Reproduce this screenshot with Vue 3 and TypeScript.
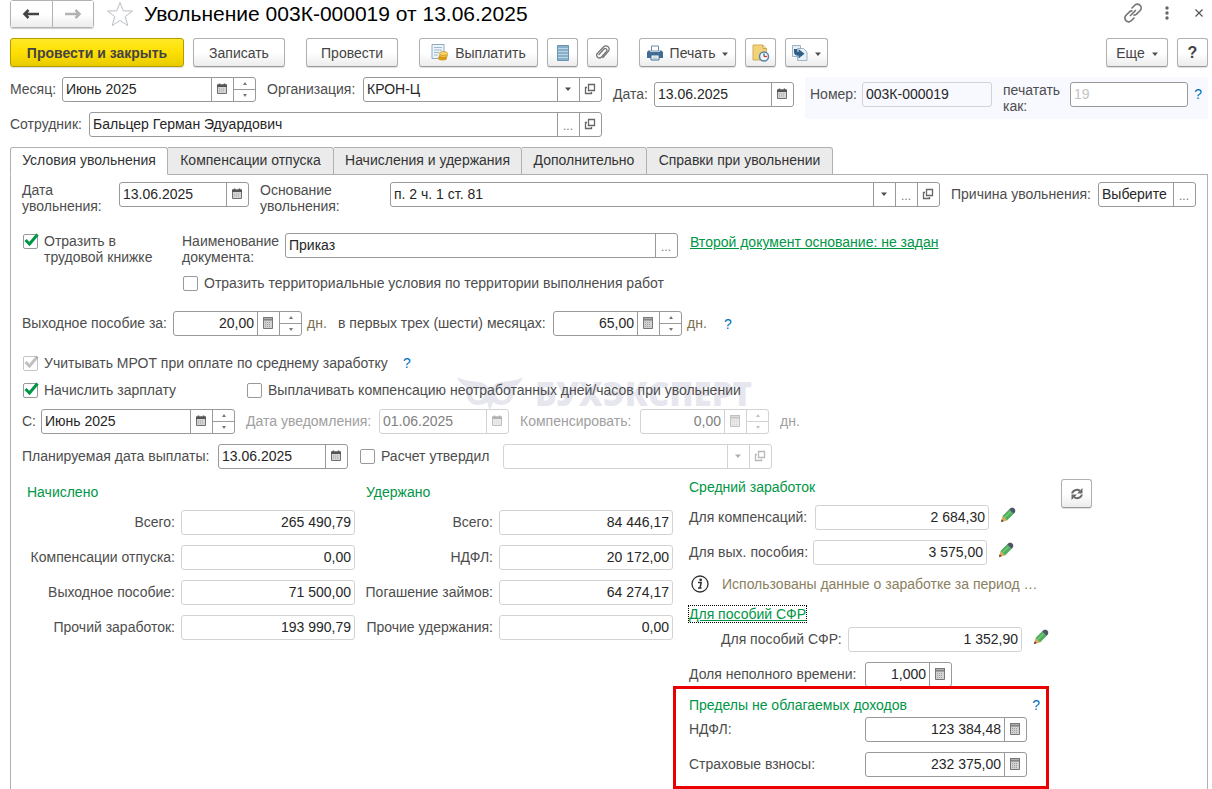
<script setup lang="ts">
import { ref } from 'vue'

interface Total {
  id: string
  label: string
  value: string
}

const tabs = [
  { title: 'Условия увольнения', size: 't1' },
  { title: 'Компенсации отпуска', size: 't2' },
  { title: 'Начисления и удержания', size: 't3' },
  { title: 'Дополнительно', size: 't4' },
  { title: 'Справки при увольнении', size: 't5' },
]
const activeTab = ref(0)

const accrued: Total[] = [
  { id: 'acc-total', label: 'Всего:', value: '265 490,79' },
  { id: 'acc-vacation', label: 'Компенсации отпуска:', value: '0,00' },
  { id: 'acc-severance', label: 'Выходное пособие:', value: '71 500,00' },
  { id: 'acc-other', label: 'Прочий заработок:', value: '193 990,79' },
]
const withheld: Total[] = [
  { id: 'wh-total', label: 'Всего:', value: '84 446,17' },
  { id: 'wh-ndfl', label: 'НДФЛ:', value: '20 172,00' },
  { id: 'wh-loans', label: 'Погашение займов:', value: '64 274,17' },
  { id: 'wh-other', label: 'Прочие удержания:', value: '0,00' },
]

const month = ref('Июнь 2025')
const date = ref('13.06.2025')
const employee = ref('Бальцер Герман Эдуардович')
const dismissDate = ref('13.06.2025')
const docName = ref('Приказ')
const inBook = ref(true)
const territorial = ref(false)
const severanceDays = ref('20,00')
const monthsDays = ref('65,00')
const payroll = ref(true)
const payHours = ref(false)
const fromMonth = ref('Июнь 2025')
const payDate = ref('13.06.2025')
const approved = ref(false)
const share = ref('1,000')
const ndflLimit = ref('123 384,48')
const feesLimit = ref('232 375,00')
</script>

<template>
  <svg class="sprite" width="0" height="0" aria-hidden="true">
    <symbol id="i-cal" viewBox="0 0 12 12">
      <path d="M1.500 2h9v8.500h-9z" fill="#d4d4d4" stroke="#707070" />
      <path d="M1 1.500h10V4H1z" fill="#555" />
      <path d="M3.500 .5v1.500M8.500 .5v1.500" stroke="#555" stroke-width="1.500" />
      <path d="M3 6h6M3 8h6" stroke="#a8a8a8" stroke-dasharray="1 1" />
    </symbol>
    <symbol id="i-calc" viewBox="0 0 12 12">
      <path d="M1.500 .5h9v11h-9z" fill="#d2d2d2" stroke="#777" />
      <path d="M1 0h10v3.500H1z" fill="#777" />
      <path d="M2 1.700h8" stroke="#bdbdbd" />
      <path d="M3 5.500h6M3 7.500h6M3 9.500h6" stroke="#a0a0a0" stroke-dasharray="1 1" />
    </symbol>
    <symbol id="i-down" viewBox="0 0 6 4"><path d="M0 .5h6L3 4z" fill="#4d4d4d" /></symbol>
    <symbol id="i-open" viewBox="0 0 12 12">
      <path d="M4.500 1.500h6v6h-6z" fill="none" stroke="#666" stroke-width="1.300" />
      <path d="M3 4.500H1.500v6h6V9" fill="none" stroke="#666" stroke-width="1.300" />
    </symbol>
    <symbol id="i-check" viewBox="0 0 15 15">
      <path d="M1.500 7 5.500 11 13.500 1.500" fill="none" stroke="currentColor" stroke-width="3" />
    </symbol>
    <symbol id="i-pencil" viewBox="0 0 16 16">
      <path d="M1 15l1.500-6 4.500 4.500z" fill="#e0a55a" />
      <path d="M1 15l.7-2.700 2 2z" fill="#4a3b30" />
      <path d="M2.500 9 9 2.500 13.500 7 7 13.500z" fill="#4fae5c" />
      <path d="M4.500 10.800l6.800-6.800" stroke="#73c97c" stroke-width="1.500" />
      <path d="M9 2.500 11 .8h2.500L15.200 2.500V5L13.500 7z" fill="#4d5866" />
    </symbol>
  </svg>

  <main class="page">
    <header class="titlebar">
      <div class="nav">
        <button type="button" aria-label="Назад">
          <svg width="18" height="12" viewBox="0 0 18 12"><path d="M6.500 2 2.500 6l4 4M2.500 6H17" fill="none" stroke="#444" stroke-width="2.500" /></svg>
        </button>
        <button type="button" aria-label="Вперед">
          <svg width="18" height="12" viewBox="0 0 18 12"><path d="M11.500 2l4 4-4 4M15.500 6H1" fill="none" stroke="#b3b3b3" stroke-width="2.500" /></svg>
        </button>
      </div>
      <button type="button" class="plain star" aria-label="В избранное">
        <svg width="28" height="26" viewBox="0 0 28 26"><path d="M14 1.500l3.200 8.300 9.300.3-7.300 5.500 2.600 8.900L14 19.400l-7.800 5.100 2.600-8.900L1.500 10.100l9.300-.3z" fill="#fff" stroke="#b9bec4" /></svg>
      </button>
      <h1>Увольнение 003К-000019 от 13.06.2025</h1>
      <div class="window-tools">
        <button type="button" class="plain" aria-label="Ссылка">
          <svg width="20" height="20" viewBox="0 0 20 20" fill="none" stroke="#777" stroke-width="1.700" stroke-linecap="round"><path d="M9 5l2.500-2.500a3.700 3.700 0 0 1 5.700 5L13.500 11.200a3 3 0 0 1-2.500.8M11 15l-2.500 2.500a3.700 3.700 0 0 1-5.700-5L6.500 8.800A3 3 0 0 1 9 8M7.500 12.500l5-5" /></svg>
        </button>
        <button type="button" class="plain" aria-label="Меню">
          <svg width="4" height="14" viewBox="0 0 4 14" fill="#666"><circle cx="2" cy="2" r="1.700" /><circle cx="2" cy="7" r="1.700" /><circle cx="2" cy="12" r="1.700" /></svg>
        </button>
        <button type="button" class="plain" aria-label="Закрыть">
          <svg width="8" height="8" viewBox="0 0 8 8"><path d="M.5.5l7 7M7.500.5l-7 7" stroke="#555" stroke-width="1.200" /></svg>
        </button>
      </div>
    </header>

    <div class="toolbar">
      <button type="button" class="btn primary b174">Провести и закрыть</button>
      <button type="button" class="btn b92">Записать</button>
      <button type="button" class="btn b92 apart">Провести</button>
      <button type="button" class="btn b119 apart">
        <svg width="17" height="17" viewBox="0 0 17 17"><path d="M1 .5h12v14H1z" fill="#edf4fa" stroke="#8ba9c0" /><path d="M3 3.500h8M3 6h8M3 8.500h5M3 11h4" stroke="#9bb9cf" /><ellipse cx="11.500" cy="14" rx="4.500" ry="2.500" fill="#d99b1c" /><ellipse cx="12.500" cy="11.500" rx="4" ry="2.200" fill="#f0c040" stroke="#b98212" stroke-width=".6" /><ellipse cx="12.500" cy="9.500" rx="4" ry="2" fill="#f9d768" stroke="#b98212" stroke-width=".6" /></svg>
        Выплатить
      </button>
      <button type="button" class="btn b31" aria-label="Движения документа">
        <svg width="12" height="16" viewBox="0 0 12 16"><path d="M.5.5h11v15H.5z" fill="#86afca" stroke="#6b94b0" /><path d="M1 3.500h10M1 6.500h10M1 9.500h10M1 12.500h10" stroke="#bcd4e3" /></svg>
      </button>
      <button type="button" class="btn b31" aria-label="Присоединенные файлы">
        <svg width="14" height="15" viewBox="0 0 14 15"><path d="M3 9.500 8 4a1.700 1.700 0 0 1 2.500 2.300L5.500 12A2.700 2.700 0 0 1 1.500 8.300L7.500 2a3.200 3.200 0 0 1 4.800 4.400L7 12.500" fill="none" stroke="#777" stroke-width="1.300" stroke-linecap="round" /></svg>
      </button>
      <button type="button" class="btn b97 apart">
        <svg width="16" height="16" viewBox="0 0 16 16"><path d="M4.500 1h7v5h-7z" fill="#fff" stroke="#6b8aa5" /><path d="M1.500 5.500h2V7h9V5.500h2L16 7v6H0V7z" fill="#416c94" /><path d="M4 10h8v5H4z" fill="#fff" stroke="#416c94" /><path d="M5.500 12h5M5.500 13.500h5" stroke="#9ab" stroke-width=".7" /></svg>
        Печать
        <svg class="arrow" width="6" height="4"><use href="#i-down" /></svg>
      </button>
      <button type="button" class="btn b31" aria-label="Напоминание">
        <svg width="18" height="18" viewBox="0 0 18 18"><path d="M1 1h10l3.500 3.500V16H1z" fill="#f2d27b" stroke="#d0ad55" /><path d="M11 1v3.500h3.500" fill="#fbeab8" stroke="#c9a54a" /><circle cx="12" cy="12.500" r="4.500" fill="#f4f8fb" stroke="#5b83a6" stroke-width="1.500" /><path d="M12 9.500v3" stroke="#3c638a" stroke-width="1.300" /><path d="M12 12.500h3" stroke="#d43a2f" stroke-width="1.300" /></svg>
      </button>
      <button type="button" class="btn b43" aria-label="Создать на основании">
        <svg width="16" height="16" viewBox="0 0 16 16"><path d="M.5.5h8v11h-8z" fill="#e5eef5" stroke="#9ab4c8" /><path d="M5.500 3.500h6l3.500 3.500v8.500H5.500z" fill="#e8f0f6" stroke="#9ab4c8" /><path d="M2 4h3v2c0 .8.500 1 1.500 1V4l6 4.800-6 4.800v-3C3.500 10.600 2 9.500 2 7z" fill="#2f5f88" /></svg>
        <svg class="arrow" width="6" height="4"><use href="#i-down" /></svg>
      </button>
      <button type="button" class="btn b62 last">
        Еще
        <svg class="arrow" width="6" height="4"><use href="#i-down" /></svg>
      </button>
      <button type="button" class="btn b31 help">?</button>
    </div>

    <section class="head">
      <div class="head-left">
        <div class="row">
          <label class="w52" for="month">Месяц:</label>
          <div class="field f194">
            <input id="month" v-model="month" type="text" />
            <button type="button" class="cell" aria-label="Календарь"><svg width="12" height="12"><use href="#i-cal" /></svg></button>
            <span class="spin"><button type="button" aria-label="Больше"></button><button type="button" aria-label="Меньше"></button></span>
          </div>
          <label class="w96 gap" for="org">Организация:</label>
          <div class="field grow">
            <select id="org"><option>КРОН-Ц</option></select>
            <span class="cell drop"><svg width="6" height="4"><use href="#i-down" /></svg></span>
            <button type="button" class="cell" aria-label="Открыть"><svg width="12" height="12"><use href="#i-open" /></svg></button>
          </div>
        </div>
        <div class="row">
          <label class="w79" for="employee">Сотрудник:</label>
          <div class="field grow">
            <input id="employee" v-model="employee" type="text" />
            <button type="button" class="cell dots" aria-label="Выбрать">...</button>
            <button type="button" class="cell" aria-label="Открыть"><svg width="12" height="12"><use href="#i-open" /></svg></button>
          </div>
        </div>
      </div>
      <div class="row head-date">
        <label class="w41" for="date">Дата:</label>
        <div class="field f140">
          <input id="date" v-model="date" type="text" />
          <button type="button" class="cell" aria-label="Календарь"><svg width="12" height="12"><use href="#i-cal" /></svg></button>
        </div>
      </div>
      <div class="row number">
        <label class="w52" for="number">Номер:</label>
        <div class="field pale clear f130"><input id="number" type="text" value="003К-000019" readonly /></div>
        <label class="w67 gap two" for="print-as">печатать<br />как:</label>
        <div class="field grow"><input id="print-as" type="text" placeholder="19" /></div>
        <button type="button" class="plain hint">?</button>
      </div>
    </section>

    <nav class="tabs" role="tablist">
      <button
        v-for="(tab, i) in tabs"
        :key="tab.title"
        type="button"
        role="tab"
        :class="['tab', tab.size, { active: i === activeTab }]"
        :aria-selected="i === activeTab"
        @click="activeTab = i"
      >
        {{ tab.title }}
      </button>
    </nav>

    <section class="panel">
      <div class="row top">
        <label class="w97 two" for="dismiss-date">Дата<br />увольнения:</label>
        <div class="field f130">
          <input id="dismiss-date" v-model="dismissDate" type="text" />
          <button type="button" class="cell" aria-label="Календарь"><svg width="12" height="12"><use href="#i-cal" /></svg></button>
        </div>
        <label class="w130 gap two" for="reason">Основание<br />увольнения:</label>
        <div class="field grow">
          <select id="reason"><option>п. 2 ч. 1 ст. 81</option></select>
          <span class="cell drop"><svg width="6" height="4"><use href="#i-down" /></svg></span>
          <button type="button" class="cell dots" aria-label="Выбрать">...</button>
          <button type="button" class="cell" aria-label="Открыть"><svg width="12" height="12"><use href="#i-open" /></svg></button>
        </div>
        <label class="w147 gap one" for="cause">Причина увольнения:</label>
        <div class="field f98">
          <input id="cause" type="text" value="Выберите" />
          <button type="button" class="cell dots" aria-label="Выбрать">...</button>
        </div>
      </div>

      <div class="row top book">
        <label class="check two w160">
          <span class="box"><input v-model="inBook" type="checkbox" /><svg width="15" height="15"><use href="#i-check" /></svg></span>
          <span>Отразить в<br />трудовой книжке</span>
        </label>
        <label class="w103 two" for="doc-name">Наименование<br />документа:</label>
        <div class="field f393">
          <input id="doc-name" v-model="docName" type="text" />
          <button type="button" class="cell dots" aria-label="Выбрать">...</button>
        </div>
        <a class="link second" href="#second">Второй документ основание: не задан</a>
      </div>

      <label class="check territory">
        <span class="box"><input v-model="territorial" type="checkbox" /><svg width="15" height="15"><use href="#i-check" /></svg></span>
        <span>Отразить территориальные условия по территории выполнения работ</span>
      </label>

      <div class="row severance">
        <label class="w151" for="sev-days">Выходное пособие за:</label>
        <div class="field f129 num">
          <input id="sev-days" v-model="severanceDays" type="text" />
          <button type="button" class="cell" aria-label="Калькулятор"><svg width="12" height="12"><use href="#i-calc" /></svg></button>
          <span class="spin"><button type="button" aria-label="Больше"></button><button type="button" aria-label="Меньше"></button></span>
        </div>
        <span class="unit">дн.</span>
        <label class="w215" for="first-days">в первых трех (шести) месяцах:</label>
        <div class="field f129 num">
          <input id="first-days" v-model="monthsDays" type="text" />
          <button type="button" class="cell" aria-label="Калькулятор"><svg width="12" height="12"><use href="#i-calc" /></svg></button>
          <span class="spin"><button type="button" aria-label="Больше"></button><button type="button" aria-label="Меньше"></button></span>
        </div>
        <span class="unit">дн.</span>
        <button type="button" class="plain hint">?</button>
      </div>

      <div class="row flags first-flags">
        <label class="check w375">
          <span class="box off"><input type="checkbox" checked disabled /><svg width="15" height="15"><use href="#i-check" /></svg></span>
          <span>Учитывать МРОТ при оплате по среднему заработку</span>
        </label>
        <button type="button" class="plain hint">?</button>
      </div>
      <div class="row flags marked">
        <div class="watermark" aria-hidden="true">
          <svg width="66" height="34" viewBox="0 0 66 34"><path d="M0 0c7 4 15 4 22 5 6 1 9 4 11 9 2-5 5-8 11-9 7-1 15-1 22-5-2 5-5 8-9 10 1 10-4 18-12 18-4 0-7-1-9-3l-3 9-3-9c-2 2-5 3-9 3C12 28 8 20 9 10 5 8 2 5 0 0z" fill="#e6e6ee" /><circle cx="21" cy="17" r="6.500" fill="#fff" /><circle cx="45" cy="17" r="6.500" fill="#fff" /></svg>
          <span>БУХЭКСПЕРТ</span>
        </div>
        <label class="check w224">
          <span class="box"><input v-model="payroll" type="checkbox" /><svg width="15" height="15"><use href="#i-check" /></svg></span>
          <span>Начислить зарплату</span>
        </label>
        <label class="check">
          <span class="box"><input v-model="payHours" type="checkbox" /><svg width="15" height="15"><use href="#i-check" /></svg></span>
          <span>Выплачивать компенсацию неотработанных дней/часов при увольнении</span>
        </label>
      </div>

      <div class="row since">
        <label class="w19" for="from-month">С:</label>
        <div class="field f194">
          <input id="from-month" v-model="fromMonth" type="text" />
          <button type="button" class="cell" aria-label="Календарь"><svg width="12" height="12"><use href="#i-cal" /></svg></button>
          <span class="spin"><button type="button" aria-label="Больше"></button><button type="button" aria-label="Меньше"></button></span>
        </div>
        <label class="w133 gap faded" for="notice">Дата уведомления:</label>
        <div class="field pale off f130">
          <input id="notice" type="text" value="01.06.2025" disabled />
          <button type="button" class="cell" disabled aria-label="Календарь"><svg width="12" height="12"><use href="#i-cal" /></svg></button>
        </div>
        <label class="w120 gap faded" for="compensate">Компенсировать:</label>
        <div class="field pale off f129 num">
          <input id="compensate" type="text" value="0,00" disabled />
          <button type="button" class="cell" disabled aria-label="Калькулятор"><svg width="12" height="12"><use href="#i-calc" /></svg></button>
          <span class="spin"><button type="button" disabled aria-label="Больше"></button><button type="button" disabled aria-label="Меньше"></button></span>
        </div>
        <span class="gap faded">дн.</span>
      </div>

      <div class="row planned">
        <label class="w196" for="pay-date">Планируемая дата выплаты:</label>
        <div class="field f130">
          <input id="pay-date" v-model="payDate" type="text" />
          <button type="button" class="cell" aria-label="Календарь"><svg width="12" height="12"><use href="#i-cal" /></svg></button>
        </div>
        <label class="check gap w144">
          <span class="box"><input v-model="approved" type="checkbox" /><svg width="15" height="15"><use href="#i-check" /></svg></span>
          <span>Расчет утвердил</span>
        </label>
        <div class="field pale off f269">
          <select aria-label="Расчет утвердил" disabled><option></option></select>
          <span class="cell drop"><svg width="6" height="4"><use href="#i-down" /></svg></span>
          <button type="button" class="cell" disabled aria-label="Открыть"><svg width="12" height="12"><use href="#i-open" /></svg></button>
        </div>
      </div>

      <div class="totals">
        <div class="sum accrued">
          <h2>Начислено</h2>
          <div v-for="t in accrued" :key="t.id" class="row sum-row">
            <label :for="t.id">{{ t.label }}</label>
            <div class="field pale num f174"><input :id="t.id" type="text" :value="t.value" readonly /></div>
          </div>
        </div>
        <div class="sum withheld">
          <h2>Удержано</h2>
          <div v-for="t in withheld" :key="t.id" class="row sum-row">
            <label :for="t.id">{{ t.label }}</label>
            <div class="field pale num f174"><input :id="t.id" type="text" :value="t.value" readonly /></div>
          </div>
        </div>
        <div class="average">
          <h2>Средний заработок</h2>
          <div class="row avg-first">
            <label class="w126" for="avg-comp">Для компенсаций:</label>
            <div class="field pale num f174"><input id="avg-comp" type="text" value="2 684,30" readonly /></div>
            <button type="button" class="plain pencil" aria-label="Изменить"><svg width="16" height="16"><use href="#i-pencil" /></svg></button>
          </div>
          <div class="row avg-next">
            <label class="w124" for="avg-sev">Для вых. пособия:</label>
            <div class="field pale num f174"><input id="avg-sev" type="text" value="3 575,00" readonly /></div>
            <button type="button" class="plain pencil" aria-label="Изменить"><svg width="16" height="16"><use href="#i-pencil" /></svg></button>
          </div>
          <p class="info">
            <svg width="18" height="18" viewBox="0 0 18 18"><circle cx="9" cy="9" r="8" fill="#fff" stroke="#333" stroke-width="1.300" /><circle cx="9.700" cy="4.800" r="1.400" fill="#333" /><path d="M7 7.500h3.200L9 13h1.500M7 13h2" fill="none" stroke="#333" stroke-width="1.500" /></svg>
            <span>Использованы данные о заработке за период …</span>
          </p>
          <a class="link focused" href="#sfr">Для пособий СФР</a>
          <div class="row sfr">
            <label class="w127" for="avg-sfr">Для пособий СФР:</label>
            <div class="field pale num f174"><input id="avg-sfr" type="text" value="1 352,90" readonly /></div>
            <button type="button" class="plain pencil" aria-label="Изменить"><svg width="16" height="16"><use href="#i-pencil" /></svg></button>
          </div>
          <div class="row avg-next">
            <label class="w176" for="share">Доля неполного времени:</label>
            <div class="field num f87">
              <input id="share" v-model="share" type="text" />
              <button type="button" class="cell" aria-label="Калькулятор"><svg width="12" height="12"><use href="#i-calc" /></svg></button>
            </div>
          </div>
          <div class="limits">
            <div class="limits-head">
              <h2>Пределы не облагаемых доходов</h2>
              <button type="button" class="plain hint">?</button>
            </div>
            <div class="row">
              <label class="w176" for="limit-ndfl">НДФЛ:</label>
              <div class="field num f162">
                <input id="limit-ndfl" v-model="ndflLimit" type="text" />
                <button type="button" class="cell" aria-label="Калькулятор"><svg width="12" height="12"><use href="#i-calc" /></svg></button>
              </div>
            </div>
            <div class="row avg-next">
              <label class="w176" for="limit-fees">Страховые взносы:</label>
              <div class="field num f162">
                <input id="limit-fees" v-model="feesLimit" type="text" />
                <button type="button" class="cell" aria-label="Калькулятор"><svg width="12" height="12"><use href="#i-calc" /></svg></button>
              </div>
            </div>
          </div>
        </div>
        <button type="button" class="btn b31 refresh" aria-label="Обновить">
          <svg width="12" height="12" viewBox="0 0 12 12" fill="none" stroke="#6a6a6a" stroke-width="2"><path d="M1.200 5.500C1.500 2.500 6 .5 9 3M10.800 6.500C10.500 9.500 6 11.500 3 9" /><path d="M11.500 0v5.500H6zM.5 12V6.500H6z" fill="#6a6a6a" stroke="none" /></svg>
        </button>
      </div>
    </section>
  </main>
</template>

<style>
body {
  margin: 0;
  background: #fff;
}
</style>

<style scoped>
.sprite {
  position: absolute;
}
.page {
  box-sizing: border-box;
  min-height: 100vh;
  display: flex;
  flex-direction: column;
  padding: 0 4px 0 10px;
  font: 14px/16px "Liberation Sans", Arial, sans-serif;
  color: #4d4d4d;
}
button,
input,
select {
  font: inherit;
  color: inherit;
  box-sizing: border-box;
  margin: 0;
}
button {
  display: flex;
  align-items: center;
  justify-content: center;
  padding: 0;
  cursor: pointer;
}
svg {
  display: block;
  flex: none;
}
h1,
h2,
p {
  margin: 0;
  font-weight: 400;
}
h1 {
  font-size: 21px;
  line-height: 28px;
  color: #000;
}
h2 {
  font-size: 14px;
  line-height: 16px;
  color: #009646;
}
.plain {
  border: 0;
  background: none;
}
.titlebar {
  display: flex;
  align-items: center;
  height: 28px;
}
.nav {
  display: flex;
  box-sizing: border-box;
  width: 84px;
  height: 28px;
  border: 1px solid #b3b3b3;
  border-radius: 3px;
  box-shadow: 0 1px 1px #ccc;
}
.nav button {
  flex: 1;
  border: 0;
  background: linear-gradient(#fff 50%, #ececec);
}
.nav button + button {
  border-left: 1px solid #b3b3b3;
}
.star {
  margin: 0 10px 0 12px;
}
.window-tools {
  display: flex;
  align-items: center;
  gap: 26px;
  margin-left: auto;
  padding: 0 5px 2px 0;
}
.window-tools .plain:first-child {
  margin-right: -4px;
}
.toolbar {
  display: flex;
  gap: 9px;
  margin-top: 10px;
}
.btn {
  height: 29px;
  gap: 7px;
  border: 1px solid #b0b0b0;
  border-bottom-color: #999;
  border-radius: 3px;
  background: linear-gradient(#fff 50%, #ececec);
  box-shadow: 0 1px 1px #ddd;
  color: #444;
}
.primary {
  border-color: #b39b00;
  background: linear-gradient(#ffe926, #ffdf00 50%, #e8cb00);
  font-weight: 700;
}
.apart {
  margin-left: 12px;
}
.last {
  margin-left: auto;
}
.help {
  font-size: 16px;
  font-weight: 700;
}
.btn .arrow {
  margin-top: 3px;
}
.b31 { width: 31px; }
.b43 { width: 43px; }
.b62 { width: 62px; }
.b92 { width: 92px; }
.b97 { width: 97px; }
.b119 { width: 119px; }
.b174 { width: 174px; }

.row {
  display: flex;
  align-items: center;
}
.row > label,
.row > .unit {
  flex: none;
  white-space: nowrap;
}
.row.top {
  align-items: flex-start;
}
.gap {
  margin-left: 11px;
}
.field {
  flex: none;
  display: flex;
  box-sizing: border-box;
  height: 25px;
  border: 1px solid #999;
  border-radius: 3px;
  background: #fff;
  color: #262626;
}
.field.grow {
  flex: 1;
  min-width: 0;
}
.field input,
.field select {
  flex: 1;
  width: 0;
  min-width: 0;
  padding: 0 3px 2px;
  border: 0;
  outline: 0;
  background: none;
  appearance: none;
}
.field select {
  padding-right: 24px;
}
.field input::placeholder {
  color: #c4c4c4;
}
.num input {
  text-align: right;
}
.field .cell {
  flex: none;
  display: flex;
  align-items: center;
  justify-content: center;
  box-sizing: border-box;
  width: 22px;
  padding: 0 1px 1px 0;
  border: 0;
  border-left: 1px solid #999;
  background: none;
}
.field .drop {
  margin-left: -22px;
  pointer-events: none;
}
.field .dots {
  padding-top: 4px;
  font-size: 12px;
  color: #777;
}
.spin {
  display: flex;
  flex-direction: column;
  width: 22px;
  box-sizing: border-box;
  border-left: 1px solid #999;
}
.spin button {
  flex: 1;
  border: 0;
  background: none;
}
.spin button + button {
  border-top: 1px solid #999;
}
.spin button::before {
  content: "";
  border: 2px solid transparent;
  border-top: 0;
  border-bottom: 3px solid #777;
}
.spin button + button::before {
  border-top: 3px solid #777;
  border-bottom: 0;
}
.pale {
  border-color: #d3d3d3;
}
.off {
  color: #808080;
}
.off .cell,
.off .spin,
.off .spin button + button {
  border-color: #d3d3d3;
}
.off svg,
.off .spin button::before {
  opacity: 0.45;
}
.clear {
  background: none;
}
.faded {
  color: #a0a0a0;
}
.f87 { width: 87px; }
.f98 { width: 98px; }
.f129 { width: 129px; }
.f130 { width: 130px; }
.f140 { width: 140px; }
.f162 { width: 162px; }
.f174 { width: 174px; }
.f194 { width: 194px; }
.f269 { width: 269px; }
.f393 { width: 393px; }
.w19 { width: 19px; }
.w41 { width: 41px; }
.w52 { width: 52px; }
.w67 { width: 67px; }
.w79 { width: 79px; }
.w96 { width: 96px; }
.w97 { width: 97px; }
.w103 { width: 103px; }
.w120 { width: 120px; }
.w124 { width: 124px; }
.w126 { width: 126px; }
.w127 { width: 127px; }
.w130 { width: 130px; }
.w133 { width: 133px; }
.w144 { width: 144px; }
.w147 { width: 147px; }
.w151 { width: 151px; }
.w160 { width: 160px; }
.w176 { width: 176px; }
.w196 { width: 196px; }
.w215 { width: 215px; }
.w224 { width: 224px; }
.w375 { width: 375px; }

.head {
  display: flex;
  align-items: flex-start;
  gap: 11px;
  margin-top: 10px;
}
.head-left {
  flex: none;
  width: 592px;
  display: flex;
  flex-direction: column;
  gap: 10px;
}
.head-date {
  margin-top: 5px;
}
.number {
  flex: 1;
  align-items: flex-start;
  box-sizing: border-box;
  height: 42px;
  padding: 5px 0 0 5px;
  background: #f8f8ff;
}
.number > label,
.number > .hint {
  margin-top: 4px;
}
.number > .two {
  margin-top: 0;
}
.hint {
  color: #0070ba;
  padding: 0 6px;
}
.tabs {
  position: relative;
  z-index: 1;
  display: flex;
  margin-top: 10px;
}
.tab {
  height: 28px;
  padding-bottom: 2px;
  border: 1px solid #b0b0b0;
  border-left: 0;
  border-radius: 0 3px 0 0;
  background: #ebebeb;
  color: #333;
  white-space: nowrap;
}
.tab:first-child {
  border-left: 1px solid #b0b0b0;
  border-radius: 3px 3px 0 0;
}
.tab.active {
  background: #fff;
  border-bottom-color: #fff;
}
.t1 { width: 158px; }
.t2 { width: 166px; }
.t3 { width: 188px; }
.t4 { width: 125px; }
.t5 { width: 186px; }
.panel {
  flex: 1;
  margin-top: -1px;
  padding: 7px 11px 0;
  border: 1px solid #b0b0b0;
  border-bottom: 0;
}
.one {
  margin-top: 4px;
}
.check {
  display: flex;
  align-items: center;
  gap: 6px;
}
.check.two {
  align-items: flex-start;
}
.check.two .box {
  margin-top: 1px;
}
.box {
  flex: none;
  position: relative;
  width: 15px;
  height: 15px;
  margin-left: 1px;
  color: #009646;
}
.box input {
  display: block;
  appearance: none;
  width: 15px;
  height: 15px;
  border: 1px solid #999;
  border-radius: 2px;
  background: #fff;
}
.box svg {
  position: absolute;
  inset: -1px auto auto 1px;
  visibility: hidden;
  pointer-events: none;
}
.box input:checked + svg {
  visibility: visible;
}
.box.off {
  color: #777;
}
.box.off input {
  border-color: #c4c4c4;
}
.book {
  margin-top: 19px;
}
.second {
  margin: 1px 0 0 12px;
}
.link {
  color: #009646;
}
.territory {
  margin: 10px 0 0 160px;
}
.severance {
  margin-top: 20px;
}
.unit {
  box-sizing: border-box;
  width: 36px;
  padding-left: 5px;
  color: #7a7050;
}
.flags {
  height: 16px;
}
.first-flags {
  margin-top: 19px;
}
.marked {
  position: relative;
  margin-top: 11px;
}
.marked .check {
  position: relative;
}
.watermark {
  position: absolute;
  left: 435px;
  top: -5px;
  display: flex;
  gap: 12px;
  color: #e6e6ee;
  font: 800 33px/34px "Open Sans", sans-serif;
}
.since {
  margin-top: 11px;
}
.planned {
  margin-top: 10px;
}
.severance > label,
.severance > .unit,
.since > label,
.since > .faded,
.planned > label,
.head-left label,
.head-date label,
.sum-row label,
.average .row > label {
  padding-bottom: 1px;
}
.totals {
  display: flex;
  align-items: flex-start;
  margin-top: 10px;
}
.sum {
  padding-top: 5px;
}
.accrued {
  width: 328px;
  margin: 0 11px 0 5px;
}
.withheld {
  width: 307px;
}
.accrued h2,
.withheld h2 {
  margin-bottom: 10px;
}
.sum-row {
  justify-content: flex-end;
  gap: 6px;
  margin-bottom: 10px;
}
.average {
  width: 375px;
  margin-left: 16px;
}
.avg-first,
.avg-next {
  margin-top: 10px;
}
.pencil {
  margin: 0 0 6px 11px;
}
.info {
  display: flex;
  align-items: center;
  gap: 13px;
  margin: 10px 0 13px 2px;
  color: #8a8060;
}
.link.focused {
  display: inline-block;
  outline: 1px dotted #000;
}
.sfr {
  margin: 5px 0 0 32px;
}
.limits {
  position: relative;
  box-sizing: border-box;
  width: 376px;
  margin: -1px 0 0 -16px;
  border: 3px solid #ea0000;
  padding: 8px 0 9px 13px;
}
.limits-head {
  display: flex;
  justify-content: space-between;
  margin-bottom: 4px;
}
.refresh {
  margin: 0 0 0 -3px;
}
</style>
